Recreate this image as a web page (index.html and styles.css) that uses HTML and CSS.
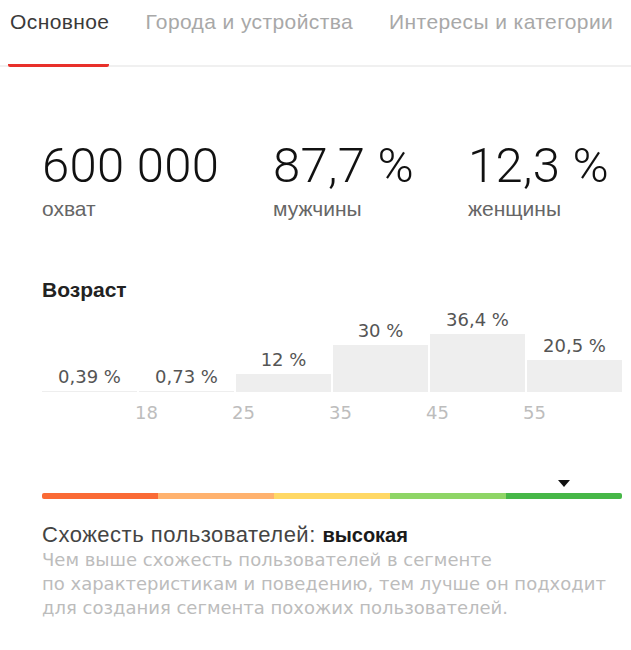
FILE: index.html
```html
<!DOCTYPE html>
<html>
	<head>
		<meta charset="UTF-8">
		<title>Сегмент</title>
		<link rel="stylesheet" href="styles.css">
	</head>
	<body>
		<div class="tabs">
			<a href="javascript:;" class="tab active">Основное</a>
			<a href="javascript:;" class="tab">Города и устройства</a>
			<a href="javascript:;" class="tab">Интересы и категории</a>
		</div>
		<div class="content">
			<div class="metrics">
				<div class="metric">
					<div class="num">600 000</div>
					<div class="cap">охват</div>
				</div>
				<div class="metric">
					<div class="num">87,7 %</div>
					<div class="cap">мужчины</div>
				</div>
				<div class="metric">
					<div class="num">12,3 %</div>
					<div class="cap">женщины</div>
				</div>
			</div>

			<h3 class="title">Возраст</h3>
			<div class="chart">
				<div class="col"><span>0,39 %</span><i style="height:1px"></i></div>
				<div class="col"><span>0,73 %</span><i style="height:1px"></i></div>
				<div class="col"><span>12 %</span><i style="height:18px"></i></div>
				<div class="col"><span>30 %</span><i style="height:47px"></i></div>
				<div class="col"><span>36,4 %</span><i style="height:58px"></i></div>
				<div class="col"><span>20,5 %</span><i style="height:32px"></i></div>
			</div>
			<div class="axis">
				<span>18</span><span>25</span><span>35</span><span>45</span><span>55</span>
			</div>

			<div class="marker"><b></b></div>
			<div class="scale">
				<i class="s1"></i><i class="s2"></i><i class="s3"></i><i class="s4"></i><i class="s5"></i>
			</div>

			<p class="likeness">Схожесть пользователей: <b>высокая</b></p>
			<p class="hint">Чем выше схожесть пользователей в сегменте<br>по характеристикам и поведению, тем лучше он подходит<br>для создания сегмента похожих пользователей.</p>
		</div>
	</body>
</html>
```

FILE: styles.css
```css
*{margin: 0;padding: 0;}
body{background: #fff;font-family: "Liberation Sans", Arial, sans-serif;color: #333;}

.tabs{display: flex;gap: 34px;padding-left: 8px;border-bottom: 2px solid #f0f0f0;}
.tab{display: block;padding: 10px 0 30px 2px;margin-bottom: -2px;border-bottom: 3px solid transparent;font-size: 21px;line-height: 24px;letter-spacing: 0.4px;color: #a8a8a8;text-decoration: none;}
.tab.active{color: #3a3a3a;border-bottom-color: #e8302a;border-radius: 0 0 2px 2px;}

.content{width: 580px;padding-left: 42px;}

.metrics{display: grid;grid-template-columns: 231px 195px auto;margin-top: 74px;}
.num{font-family: Roboto, sans-serif;font-weight: 300;font-size: 49px;line-height: 49px;letter-spacing: 0.3px;color: #111;}
.cap{margin-top: 7px;font-size: 21px;line-height: 24px;color: #666;}

.title{margin-top: 57px;font-size: 21px;line-height: 24px;font-weight: bold;color: #222;}

.chart{display: flex;gap: 2px;height: 90px;align-items: flex-end;}
.col{width: 95px;display: flex;flex-direction: column;align-items: center;}
.col span{margin-bottom: 4px;font-family: "DejaVu Sans", sans-serif;font-size: 18px;line-height: 20px;color: #555;}
.col i{display: block;width: 100%;background: #eeeeee;}

.axis{display: flex;margin-top: 11px;padding-left: 56px;}
.axis span{width: 97px;text-align: center;font-family: "DejaVu Sans", sans-serif;font-size: 18px;line-height: 20px;color: #bdbdbd;}

.marker{margin-top: 57px;padding-left: 516px;height: 7px;}
.marker b{display: block;width: 0;height: 0;border-left: 6px solid transparent;border-right: 6px solid transparent;border-top: 7px solid #111;}
.scale{display: flex;margin-top: 6px;height: 6px;border-radius: 2px;overflow: hidden;}
.scale i{flex: 1;}
.s1{background: #fa6a35;}
.s2{background: #ffb26e;}
.s3{background: #ffd865;}
.s4{background: #8fd566;}
.s5{background: #46b747;}

.likeness{margin-top: 24px;font-size: 22px;line-height: 24px;letter-spacing: 0.5px;color: #444;}
.likeness b{font-size: 20px;letter-spacing: 0;color: #1a1a1a;}
.hint{margin-top: 1px;font-family: "DejaVu Sans", sans-serif;font-size: 18px;line-height: 24px;color: #bcbcbc;}
```
